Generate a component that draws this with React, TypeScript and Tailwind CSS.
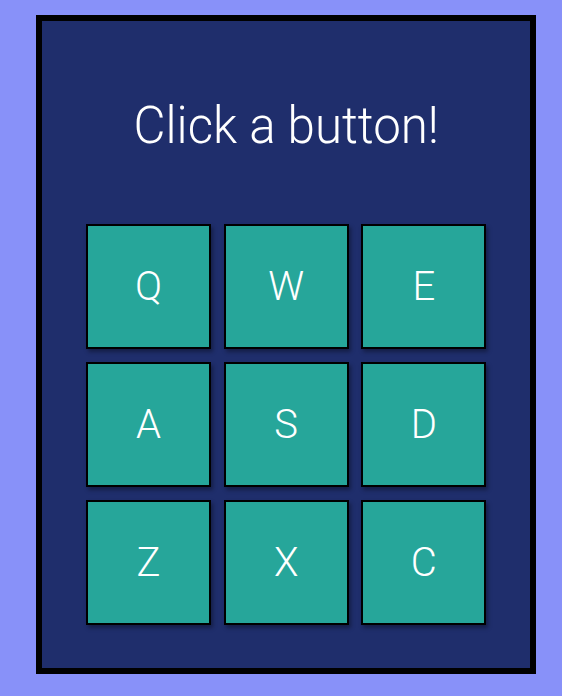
const keys = ['Q', 'W', 'E', 'A', 'S', 'D', 'Z', 'X', 'C'];

export default function App() {
  return (
    <div className="min-h-screen w-full bg-[#8891f9] pl-[36px] pt-[15px]" style={{ fontFamily: 'Roboto, sans-serif' }}>
      <div className="flex h-[659px] w-[500px] flex-col items-center border-[6px] border-black bg-[#1f2e6c]">
        <h1 className="mt-[75px] scale-x-[0.947] text-[52px] leading-[60px] font-light text-white">Click a button!</h1>
        <div className="mt-[68px] grid w-[400px] grid-cols-3 gap-x-[13px] gap-y-[13px]">
          {keys.map((k) => (
            <button
              key={k}
              className="flex h-[125px] w-[125px] items-center justify-center border-2 border-black bg-[#26a69a] text-[40px] font-light text-white shadow-[2px_3px_4px_rgba(0,0,0,0.35)]"
            >
              {k}
            </button>
          ))}
        </div>
      </div>
    </div>
  );
}
